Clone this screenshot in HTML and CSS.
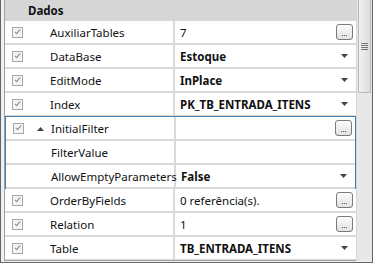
FILE: index.html
```html
<!DOCTYPE html>
<html>
<head>
<meta charset="utf-8">
<link rel="stylesheet" href="styles.css">
</head>
<body>
<div class="frame">
  <div class="grid">
    <div class="cat">Dados</div>
    <div class="row">
      <div class="chk"><span class="box"></span></div>
      <div class="name">AuxiliarTables</div>
      <div class="val"><span class="txt">7</span><span class="btn"><span class="dots"></span></span></div>
    </div>
    <div class="row">
      <div class="chk"><span class="box"></span></div>
      <div class="name">DataBase</div>
      <div class="val"><span class="txt b">Estoque</span><span class="arrow"></span></div>
    </div>
    <div class="row">
      <div class="chk"><span class="box"></span></div>
      <div class="name">EditMode</div>
      <div class="val"><span class="txt b">InPlace</span><span class="arrow"></span></div>
    </div>
    <div class="row">
      <div class="chk"><span class="box"></span></div>
      <div class="name">Index</div>
      <div class="val"><span class="txt b">PK_TB_ENTRADA_ITENS</span><span class="arrow"></span></div>
    </div>
    <div class="group">
      <div class="row">
        <div class="chk"><span class="box"></span></div>
        <div class="name"><span class="exp"></span>InitialFilter</div>
        <div class="val"><span class="txt"></span><span class="btn"><span class="dots"></span></span></div>
      </div>
      <div class="row">
        <div class="chk"></div>
        <div class="name">FilterValue</div>
        <div class="val"><span class="txt"></span></div>
      </div>
      <div class="row">
        <div class="chk"></div>
        <div class="name">AllowEmptyParameters</div>
        <div class="val"><span class="txt b">False</span><span class="arrow"></span></div>
      </div>
    </div>
    <div class="row">
      <div class="chk"><span class="box"></span></div>
      <div class="name">OrderByFields</div>
      <div class="val"><span class="txt">0 referência(s).</span><span class="btn"><span class="dots"></span></span></div>
    </div>
    <div class="row">
      <div class="chk"><span class="box"></span></div>
      <div class="name">Relation</div>
      <div class="val"><span class="txt">1</span><span class="btn"><span class="dots"></span></span></div>
    </div>
    <div class="row">
      <div class="chk"><span class="box"></span></div>
      <div class="name">Table</div>
      <div class="val"><span class="txt b">TB_ENTRADA_ITENS</span><span class="arrow"></span></div>
    </div>
  </div>
  <div class="scroll">
    <div class="thumb"><span class="grip"></span></div>
  </div>
</div>
</body>
</html>
```
FILE: styles.css
```css
html, body { margin: 0; padding: 0; background: #f0f0f0; }
body { font-family: "Noto Sans", "Open Sans", sans-serif; font-size: 11.5px; color: #111; }
.frame {
  width: 373px; height: 263px; box-sizing: border-box;
  border-left: 1px solid #646464; border-right: 1px solid #646464; border-bottom: 1px solid #646464;
  padding-left: 3px; padding-bottom: 1px;
  display: flex; background: #f0f0f0;
}
.grid {
  flex: 1; display: flex; flex-direction: column;
  border-left: 1px solid #a0a0a0; border-bottom: 1px solid #a0a0a0;
  background: #d6d6d6; overflow: hidden;
}
.cat { height: 21px; line-height: 22px; font-weight: bold; padding-left: 23px; background: #d6d6d6; flex: none; }
.row {
  height: 22px; display: grid; grid-template-columns: 26px 144px 1fr;
  background: #fff; border-bottom: 2px solid #d9d9d9; flex: none;
}
.chk { display: flex; align-items: center; padding-left: 7px; }
.box {
  width: 9px; height: 9px; border: 1px solid #a8a8a8; background: #f4f4f4; position: relative;
}
.box::after {
  content: ""; position: absolute; left: 3px; top: 0px; width: 2px; height: 5px;
  border-right: 1px solid #8a8a8a; border-bottom: 1px solid #8a8a8a; transform: rotate(40deg);
}
.name { display: flex; align-items: center; padding-left: 19px; border-right: 2px solid #d9d9d9; white-space: nowrap; position: relative; }
.exp {
  position: absolute; left: 5px; top: 10px; width: 7px; height: 4px; background: #444;
  clip-path: polygon(50% 0, 100% 100%, 0 100%);
}
.val { display: flex; align-items: center; padding-left: 5px; padding-right: 3px; }
.txt { flex: 1; white-space: nowrap; }
.b { font-weight: bold; }
.btn {
  width: 15px; height: 14px; border: 1px solid #7a7a7a; border-radius: 3px;
  background: linear-gradient(#fbfbfb, #e2e2e2); position: relative;
}
.dots {
  position: absolute; left: 5px; bottom: 3px; width: 1px; height: 1px; background: #555;
  box-shadow: 2px 0 #555, 4px 0 #555;
}
.arrow {
  width: 7px; height: 4px; margin-right: 5px; background: #444;
  clip-path: polygon(0 0, 100% 0, 50% 100%);
}
.group { border: 1px solid #3d7fb5; margin-top: -1px; margin-bottom: -1px; flex: none; }
.scroll { width: 15px; background: #e8e8e8; border-left: 1px solid #d6d6d6; display: flex; flex-direction: column; }
.thumb {
  height: 92px; margin: 0 1px; background: linear-gradient(90deg, #f2f2f2, #dcdcdc);
  border: 1px solid #b8b8b8; border-top: none; display: flex; align-items: center; justify-content: center;
}
.grip { width: 7px; height: 7px; background: repeating-linear-gradient(#777 0 1px, transparent 1px 2px); }
```
